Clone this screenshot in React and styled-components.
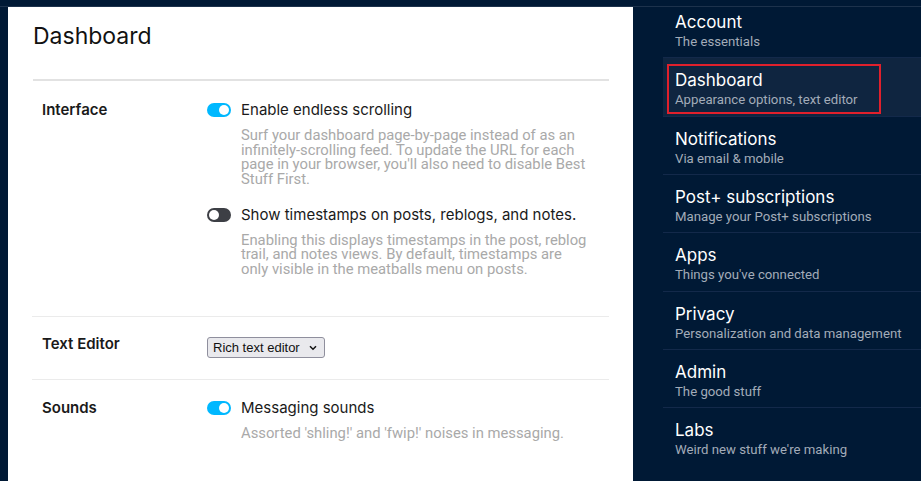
import React, { useState } from 'react';
import styled, { createGlobalStyle } from 'styled-components';

const GlobalStyle = createGlobalStyle`
  html, body {
    margin: 0;
    padding: 0;
    background: #001935;
    height: 100%;
    overflow: hidden;
  }
`;

const Page = styled.div`
  min-height: 481px;
  background: #001935;
`;

const TopBar = styled.div`
  height: 6px;
  border-bottom: 1px solid #1d324c;
`;

const Columns = styled.div`
  display: flex;
  gap: 30px;
  padding-left: 8px;
  height: 474px;
`;

const Main = styled.main`
  width: 625px;
  flex: none;
  background: #ffffff;
  padding: 16px 24px 0;
  box-sizing: border-box;
`;

const Heading = styled.h1`
  margin: 0 0 0 1px;
  font-family: Inter, sans-serif;
  font-weight: 400;
  font-size: 23px;
  line-height: 26px;
  color: #121212;
  padding-bottom: 30px;
  border-bottom: 2px solid #e2e2e2;
`;

const Section = styled.section`
  display: grid;
  grid-template-columns: 165px 1fr;
  padding: ${(p) => p.$pad || '20px 10px'};
  border-bottom: ${(p) => (p.$last ? 'none' : '1px solid #ebebeb')};
`;

const SectionLabel = styled.div`
  font-family: Inter, sans-serif;
  font-weight: 600;
  font-size: 15px;
  line-height: 16px;
  color: #1a1a1a;
`;

const Options = styled.div`
  display: flex;
  flex-direction: column;
  gap: 20px;
`;

const Option = styled.div`
  display: grid;
  grid-template-columns: 34px 1fr;
  row-gap: 10px;
`;

const Toggle = styled.button`
  position: relative;
  width: 24px;
  height: 14px;
  margin-top: 1px;
  padding: 0;
  border: none;
  border-radius: 7px;
  background: ${(p) => (p.$on ? '#00b8ff' : '#3d3f45')};
  cursor: pointer;

  &::after {
    content: '';
    position: absolute;
    top: 2px;
    left: ${(p) => (p.$on ? '12px' : '2px')};
    width: 10px;
    height: 10px;
    border-radius: 50%;
    background: #ffffff;
  }
`;

const OptionTitle = styled.div`
  font-family: Inter, sans-serif;
  font-size: 15px;
  line-height: 16px;
  color: #1a1a1a;
`;

const OptionText = styled.p`
  grid-column: 2;
  margin: 0;
  max-width: 346px;
  font-family: Roboto, sans-serif;
  font-size: 14.8px;
  line-height: 14.67px;
  color: #a9a9a9;
`;

const SelectWrap = styled.div`
  position: relative;
  width: 118px;
  height: 21px;
  margin-top: 1px;
`;

const Select = styled.select`
  appearance: none;
  width: 100%;
  height: 100%;
  padding: 0 0 0 5px;
  border: 1px solid #8f8f9d;
  border-radius: 3px;
  background: #e9e9ed;
  font-family: 'Liberation Sans', Arial, sans-serif;
  font-size: 13px;
  color: #111111;
`;

const Chevron = styled.svg`
  position: absolute;
  right: 8px;
  top: 8px;
  pointer-events: none;
`;

const Sidebar = styled.nav`
  flex: 1;
  display: flex;
  flex-direction: column;
`;

const NavItem = styled.a`
  position: relative;
  display: block;
  padding: 11px 12px 6.33px;
  border-bottom: 1px solid #13294a;
  background: ${(p) => (p.$active ? '#0f2540' : 'transparent')};
  text-decoration: none;

  &:first-child {
    padding-top: 4px;
  }
  &:last-child {
    border-bottom: none;
  }
`;

const NavTitle = styled.div`
  font-family: Inter, sans-serif;
  font-size: 17px;
  line-height: 22px;
  color: #ffffff;
`;

const NavSub = styled.div`
  font-family: Roboto, sans-serif;
  font-size: 13.2px;
  line-height: 18px;
  color: #a3acb9;
`;

const Highlight = styled.span`
  position: absolute;
  left: 4px;
  top: 6px;
  width: 214px;
  height: 50px;
  box-sizing: border-box;
  border: 2px solid #e0202c;
  pointer-events: none;
`;

const navItems = [
  ['Account', 'The essentials'],
  ['Dashboard', 'Appearance options, text editor'],
  ['Notifications', 'Via email & mobile'],
  ['Post+ subscriptions', 'Manage your Post+ subscriptions'],
  ['Apps', "Things you've connected"],
  ['Privacy', 'Personalization and data management'],
  ['Admin', 'The good stuff'],
  ['Labs', "Weird new stuff we're making"],
];

export default function App() {
  const [endless, setEndless] = useState(true);
  const [stamps, setStamps] = useState(false);
  const [sounds, setSounds] = useState(true);

  return (
    <Page>
      <GlobalStyle />
      <TopBar />
      <Columns>
        <Main>
          <Heading>Dashboard</Heading>
          <Section $pad="21px 10px 39px">
            <SectionLabel>Interface</SectionLabel>
            <Options>
              <Option>
                <Toggle $on={endless} onClick={() => setEndless(!endless)} />
                <OptionTitle>Enable endless scrolling</OptionTitle>
                <OptionText>
                  Surf your dashboard page-by-page instead of as an infinitely-scrolling feed. To
                  update the URL for each page in your browser, you'll also need to disable Best
                  Stuff First.
                </OptionText>
              </Option>
              <Option>
                <Toggle $on={stamps} onClick={() => setStamps(!stamps)} />
                <OptionTitle>Show timestamps on posts, reblogs, and notes.</OptionTitle>
                <OptionText>
                  Enabling this displays timestamps in the post, reblog trail, and notes views. By
                  default, timestamps are only visible in the meatballs menu on posts.
                </OptionText>
              </Option>
            </Options>
          </Section>
          <Section $pad="19px 10px 21px">
            <SectionLabel>Text Editor</SectionLabel>
            <SelectWrap>
              <Select defaultValue="rich">
                <option value="rich">Rich text editor</option>
                <option value="html">HTML</option>
                <option value="md">Markdown</option>
              </Select>
              <Chevron width="8" height="6" viewBox="0 0 8 6">
                <path d="M1 1.2 4 4.2 7 1.2" fill="none" stroke="#111" strokeWidth="1.5" />
              </Chevron>
            </SelectWrap>
          </Section>
          <Section $pad="20px 10px" $last>
            <SectionLabel>Sounds</SectionLabel>
            <Option>
              <Toggle $on={sounds} onClick={() => setSounds(!sounds)} />
              <OptionTitle>Messaging sounds</OptionTitle>
              <OptionText>Assorted 'shling!' and 'fwip!' noises in messaging.</OptionText>
            </Option>
          </Section>
        </Main>
        <Sidebar>
          {navItems.map(([title, sub]) => (
            <NavItem key={title} href="#" $active={title === 'Dashboard'}>
              <NavTitle>{title}</NavTitle>
              <NavSub>{sub}</NavSub>
              {title === 'Dashboard' && <Highlight />}
            </NavItem>
          ))}
        </Sidebar>
      </Columns>
    </Page>
  );
}
